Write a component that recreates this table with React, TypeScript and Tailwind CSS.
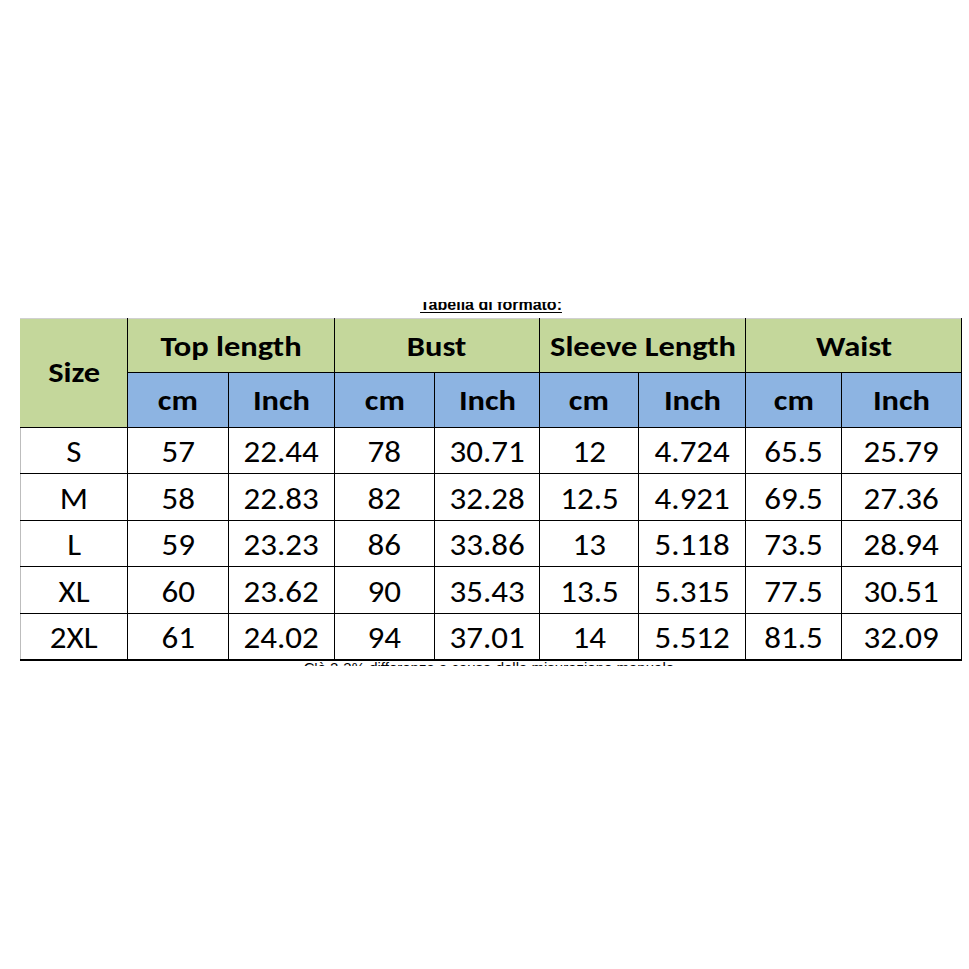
import React from "react"

const font = { fontFamily: "Carlito, Lato, 'Open Sans', sans-serif" }

const rows = [
  ["S", "57", "22.44", "78", "30.71", "12", "4.724", "65.5", "25.79"],
  ["M", "58", "22.83", "82", "32.28", "12.5", "4.921", "69.5", "27.36"],
  ["L", "59", "23.23", "86", "33.86", "13", "5.118", "73.5", "28.94"],
  ["XL", "60", "23.62", "90", "35.43", "13.5", "5.315", "77.5", "30.51"],
  ["2XL", "61", "24.02", "94", "37.01", "14", "5.512", "81.5", "32.09"],
]

const widths = [107, 101, 106, 101, 105, 99, 107, 96, 120]
const groups = ["Top length", "Bust", "Sleeve Length", "Waist"]

// the source image is a little stretched sideways
function Wide({ children }: { children: React.ReactNode }) {
  return <span className="inline-block scale-x-[1.12]">{children}</span>
}

export default function App() {
  return (
    <div className="w-[969px] h-[969px] bg-white pt-[302px] pl-[20px]">
      <div className="w-[942px]">
        <div className="h-[13px] overflow-hidden flex justify-center">
          <div
            className="-mt-[5px] leading-[16px] text-[16px] font-bold text-black underline underline-offset-[2px]"
            style={{ fontFamily: "'Liberation Sans', Arial, sans-serif" }}
          >
            Tabella di formato:
          </div>
        </div>
        <table className="mt-[3px] table-fixed border-collapse text-black" style={font}>
          <colgroup>
            {widths.map((w, i) => (
              <col key={i} style={{ width: w }} />
            ))}
          </colgroup>
          <thead>
            <tr className="h-[54px]">
              <th
                rowSpan={2}
                className="bg-[#c4d79b] border border-black border-l-[#c4d79b] border-t-[#d0d0d0] text-[29px] font-bold"
              >
                <Wide>Size</Wide>
              </th>
              {groups.map((g) => (
                <th
                  key={g}
                  colSpan={2}
                  className="bg-[#c4d79b] border border-black border-t-[#d0d0d0] text-[29px] font-bold pt-[2px]"
                >
                  <Wide>{g}</Wide>
                </th>
              ))}
            </tr>
            <tr className="h-[55px]">
              {groups.map((g) => (
                <React.Fragment key={g}>
                  <th className="bg-[#8db4e2] border border-black text-[29px] font-bold pt-[2px]">
                    <Wide>cm</Wide>
                  </th>
                  <th className="bg-[#8db4e2] border border-black text-[29px] font-bold pt-[2px]">
                    <Wide>Inch</Wide>
                  </th>
                </React.Fragment>
              ))}
            </tr>
          </thead>
          <tbody>
            {rows.map((r, ri) => (
              <tr key={r[0]} className={ri % 2 === 0 ? "h-[46px]" : "h-[47px]"}>
                {r.map((c, ci) => (
                  <td
                    key={ci}
                    className={
                      "border border-black text-center text-[30px] font-normal pt-[3px] leading-none" +
                      (ci === 0 ? " border-l-[#bdbdbd]" : "") +
                      (ri === rows.length - 1 ? " border-b-2" : "")
                    }
                  >
                    <span className="inline-block scale-x-110">{c}</span>
                  </td>
                ))}
              </tr>
            ))}
          </tbody>
        </table>
        <div className="h-[5px] overflow-hidden flex justify-center">
          <div
            className="-mt-[1px] leading-[16px] text-[15px] text-black"
            style={{ fontFamily: "'Liberation Sans', Arial, sans-serif" }}
          >
            C'è 2-3% differenza a causa della misurazione manuale.
          </div>
        </div>
      </div>
    </div>
  )
}
